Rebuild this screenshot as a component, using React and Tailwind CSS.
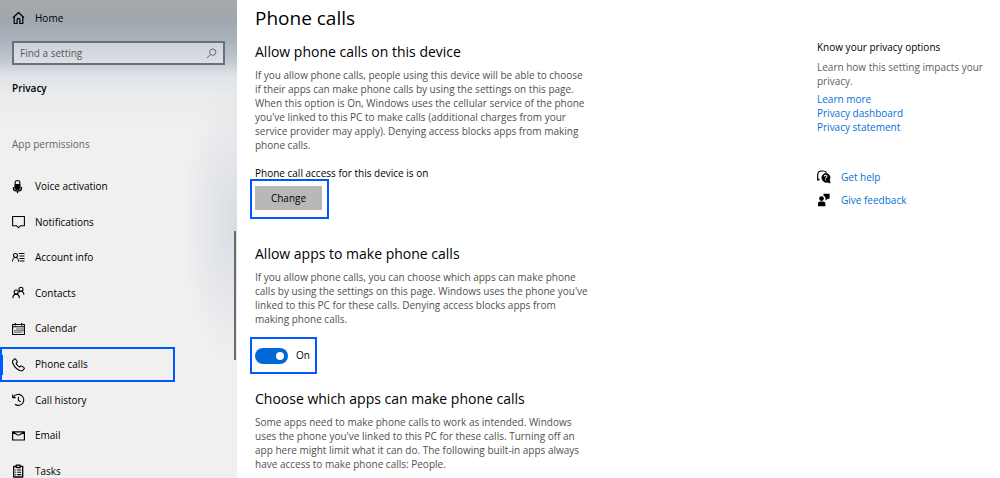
import React from "react";

const Icon = ({ children, className = "size-[14px]" }) => (
  <svg
    viewBox="0 0 14 14"
    className={`${className} shrink-0`}
    fill="none"
    stroke="currentColor"
    strokeWidth="1.1"
    strokeLinejoin="round"
    aria-hidden="true"
  >
    {children}
  </svg>
);

const icons = {
  home: (
    <Icon>
      <path d="M1 6.800 6.500 1.500l5.500 5.300M2.200 5.800v6.700h2.900V8.800a1.400 1.400 0 0 1 2.800 0v3.700h2.900V5.800" strokeWidth="1.2" />
    </Icon>
  ),
  mic: (
    <Icon>
      <rect x="3.200" y=".8" width="4.600" height="8.400" rx="1.200" />
      <path d="M3.200 4.500h4.600V8L6.800 9.200H4.200L3.200 8z" fill="currentColor" />
      <path d="M1.500 7v1.200a2.600 2.600 0 0 0 2.600 2.600h2.800a2.600 2.600 0 0 0 2.600-2.600V7M5.500 10.800v2.400" strokeWidth="1.300" />
    </Icon>
  ),
  notification: (
    <Icon>
      <path d="M.6 1.500h11.800v9.200H8.700l-2.200 2-2.200-2H.6z" />
    </Icon>
  ),
  account: (
    <Icon>
      <circle cx="3.500" cy="4.500" r="2" />
      <path d="M.5 10.500c0-2.500 1.100-4 3-4s3 1.500 3 4M6.800 2.500h5.700M7.500 5h5M7.500 7.500h5M7.500 10h5" strokeWidth="1" />
    </Icon>
  ),
  contacts: (
    <Icon>
      <circle cx="9" cy="3.200" r="2" />
      <circle cx="4.200" cy="6" r="2" />
      <path d="M.8 12.300C1 9.600 2.300 8.100 4.200 8.100s2.900 1.500 3.300 4M6.600 6.300c.6-.7 1.400-1 2.400-1 1.900 0 2.700 1.300 2.900 3.500" />
    </Icon>
  ),
  calendar: (
    <Icon>
      <path d="M.6 2.500h11.800v10H.6zM.6 4.800h11.800M3.300 1v2.500M9.700 1v2.500" />
      <path d="M3 8v3.200M5 6.300v4.900M7 6.300v4.900M9 6.300v4.900M10.800 6.300v3" strokeWidth=".9" strokeDasharray="1.300 .4" />
    </Icon>
  ),
  phone: (
    <Icon>
      <path d="M.9 2.600 2.300 1.100c.4-.4 1-.3 1.300.1l1.500 2.100c.3.400.2.900-.1 1.200l-.9.900c.7 1.500 2.100 2.900 3.700 3.700l.9-.9c.3-.3.800-.4 1.200-.1l2.100 1.500c.5.300.5.900.1 1.300l-1.300 1.400c-.8.800-1.900.7-3 .3C5 11.400 2.100 8.500.8 5.300c-.4-.9-.5-2 .1-2.700z" />
    </Icon>
  ),
  history: (
    <Icon>
      <path d="M1.500 4.200A5.500 5.500 0 1 1 3 11.300M.7 1.600v3h3M6.400 3.800v3.700l2.300 1.300" />
    </Icon>
  ),
  email: (
    <Icon>
      <path d="M.6 2.800h11.800v8.200H.6zM1 3.200l4.300 2.500c.8.400 1.600.4 2.400 0L12 3.200" strokeWidth="1.200" />
    </Icon>
  ),
  tasks: (
    <Icon>
      <path d="M4.200 2.300H1.700V13h9V2.300H8.200M4.200 1.200h4v2.300h-4z" strokeWidth="1.300" />
      <path d="M3.200 6h1M5.200 6h4M3.200 8.300h1M5.200 8.300h4M3.200 10.600h1M5.200 10.600h4" />
    </Icon>
  ),
  search: (
    <Icon className="size-[11px]">
      <circle cx="8.600" cy="5.300" r="4" />
      <path d="M5.700 8.200 1 13" />
    </Icon>
  ),
  help: (
    <Icon>
      <path d="M2.500 9 .7 10.200V4.800A4 4 0 0 1 4.700 1h1.500c1.500 0 2.700.6 3.400 1.600" strokeWidth="1.200" />
      <path d="M8.600 3.200a4.400 4.400 0 0 1 4 6.400l.6 3.500-3-.8A4.500 4.500 0 1 1 8.600 3.200z" fill="currentColor" strokeWidth=".5" />
      <path d="M7.200 6.500c.1-1.700 2.800-1.600 2.700 0 0 .9-1.300.9-1.300 2M8.600 9.500v1.100" stroke="white" />
    </Icon>
  ),
  feedback: (
    <Icon>
      <g fill="currentColor" stroke="none">
        <circle cx="4.500" cy="5.600" r="2.400" />
        <path d="M1 13.200V11c0-1.400.7-2.400 2-2.400h3.400c1.300 0 2 1 2 2.400v2.200zM6.500.8H12.600v5h-1.900L8.600 7.800V5.500A3.500 3.500 0 0 0 6.500 2.500z" />
      </g>
    </Icon>
  ),
};

const permissions = [
  { label: "Voice activation", icon: icons.mic },
  { label: "Notifications", icon: icons.notification },
  { label: "Account info", icon: icons.account },
  { label: "Contacts", icon: icons.contacts },
  { label: "Calendar", icon: icons.calendar },
  { label: "Phone calls", icon: icons.phone, active: true },
  { label: "Call history", icon: icons.history },
  { label: "Email", icon: icons.email },
  { label: "Tasks", icon: icons.tasks },
];

function Sidebar() {
  return (
    <aside className="relative h-full overflow-hidden bg-[linear-gradient(to_bottom,#aaa9ab_0px,#a0a7ae_20px,#a8b2bb_40px,#bfc8d1_60px,#dfe3e7_76px,#e9ebec_95px,#f0f0f0_130px,#f0f0f0_100%)]">
      <div className="absolute top-20 right-0 h-72 w-14 bg-[radial-gradient(ellipse_at_right,#cdd3deb0,transparent_70%)]" />
      <div className="relative">
        <a href="#home" className="flex h-9 items-center gap-[9px] px-3">
          {icons.home}
          Home
        </a>
        <label className="mx-3 mt-[5px] flex h-6 items-center border-2 border-[#6b7077] bg-white/40 px-1.5 text-[#55595d]">
          <input
            type="text"
            aria-label="Find a setting"
            placeholder="Find a setting"
            className="min-w-0 flex-1 bg-transparent outline-none placeholder:text-[#55595d]"
          />
          {icons.search}
        </label>
        <h2 className="mx-3 mt-[15px] leading-4 font-semibold">Privacy</h2>
        <h3 className="mx-3 mt-10 leading-4 text-[#666666]">App permissions</h3>
        <nav className="mt-[17px] grid h-80 auto-rows-fr">
          {permissions.map(({ label, icon, active }) => (
            <a
              key={label}
              href="#permission"
              aria-current={active ? "page" : undefined}
              className={
                active
                  ? "relative mr-[62px] flex items-center gap-[9px] border-2 border-[#0059ff] pl-2.5"
                  : "flex items-center gap-[9px] pl-3"
              }
            >
              {active && <span className="absolute left-0 h-5 w-px bg-[#0059ff]" />}
              {icon}
              {label}
            </a>
          ))}
        </nav>
      </div>
      <div className="absolute top-[231px] right-px h-[129px] w-0.5 bg-[#6b6b6b]" />
    </aside>
  );
}

function Section({ title, text, children }) {
  return (
    <section>
      <h2 className="text-[14px] leading-5 font-medium">{title}</h2>
      <p className="mt-1.5 leading-[14px] text-[#505050]">{text}</p>
      {children}
    </section>
  );
}

function Toggle() {
  return (
    <label className="relative flex items-center gap-2">
      <input type="checkbox" defaultChecked className="sr-only" />
      <span className="flex h-4 w-[33px] items-center justify-end rounded-full bg-[#0067d6] px-1">
        <span className="size-2 rounded-full bg-white" />
      </span>
      On
    </label>
  );
}

export default function App() {
  return (
    <div className="grid h-screen grid-cols-[237px_1fr_183px] overflow-hidden bg-white font-['Open_Sans','Noto_Sans',sans-serif] text-[10px] text-black">
      <Sidebar />
      <main className="px-[18px] pt-1.5">
        <h1 className="text-[19px] leading-6">Phone calls</h1>
        <div className="mt-3 max-w-[334px]">
          <Section
            title="Allow phone calls on this device"
            text="If you allow phone calls, people using this device will be able to choose if their apps can make phone calls by using the settings on this page. When this option is On, Windows uses the cellular service of the phone you've linked to this PC to make calls (additional charges from your service provider may apply). Denying access blocks apps from making phone calls."
          >
            <p className="mt-[15px] leading-3">Phone call access for this device is on</p>
            <div className="-ml-[5px] flex h-10 w-fit items-start border-2 border-[#0059ff] pt-[5px] pr-[5px] pl-[3px]">
              <button className="h-6 w-[67px] bg-[#b8b8b8]">Change</button>
            </div>
          </Section>
          <div className="mt-[25px]">
            <Section
              title="Allow apps to make phone calls"
              text="If you allow phone calls, you can choose which apps can make phone calls by using the settings on this page. Windows uses the phone you've linked to this PC for these calls. Denying access blocks apps from making phone calls."
            >
              <div className="mt-[11px] -ml-[5px] flex h-[37px] w-fit items-center border-2 border-[#0059ff] pr-[5px] pl-[3px]">
                <Toggle />
              </div>
            </Section>
          </div>
          <div className="mt-[15px]">
            <Section
              title="Choose which apps can make phone calls"
              text="Some apps need to make phone calls to work as intended. Windows uses the phone you've linked to this PC for these calls. Turning off an app here might limit what it can do. The following built-in apps always have access to make phone calls: People."
            />
          </div>
        </div>
      </main>
      <aside className="pt-10 pr-3 leading-[14px]">
        <h2 className="font-medium">Know your privacy options</h2>
        <p className="mt-1.5 text-[#606060]">Learn how this setting impacts your privacy.</p>
        <div className="mt-1 flex flex-col items-start font-medium text-[#0072d6]">
          <a href="#learn">Learn more</a>
          <a href="#dashboard">Privacy dashboard</a>
          <a href="#statement">Privacy statement</a>
        </div>
        <div className="mt-9 flex flex-col gap-[9px] font-medium text-[#0072d6]">
          <a href="#help" className="flex items-center gap-2.5">
            <span className="text-black">{icons.help}</span>
            Get help
          </a>
          <a href="#feedback" className="flex items-center gap-2.5">
            <span className="text-black">{icons.feedback}</span>
            Give feedback
          </a>
        </div>
      </aside>
    </div>
  );
}
